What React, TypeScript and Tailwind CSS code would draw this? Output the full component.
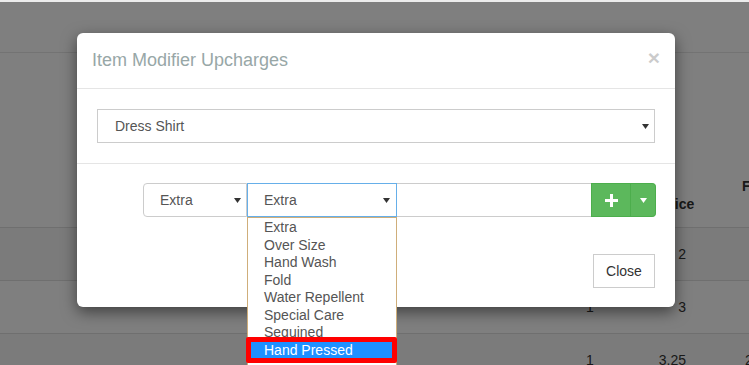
import React from "react";

const upcharges = [
    "Extra",
    "Over Size",
    "Hand Wash",
    "Fold",
    "Water Repellent",
    "Special Care",
    "Sequined",
    "Hand Pressed",
];

function Caret({ className }: { className?: string }) {
    return (
        <svg width="7" height="5" viewBox="0 0 7 5" className={className}>
            <path d="M0 0h7L3.5 5z" fill="currentColor" />
        </svg>
    );
}

function PageBehind() {
    return (
        <div className="flex flex-col w-full h-full bg-white text-[14px] text-[#333]">
            {/* Page header */}
            <div className="h-[51px] border-b border-[#e6e6e6] shrink-0" />

            {/* Table head */}
            <div className="flex h-[175px] border-b border-[#dedede] shrink-0 font-bold">
                <div className="w-[660px] shrink-0" />
                <div className="w-[82px] shrink-0 self-end pb-[13px] leading-[20px]">Price</div>
                <div className="self-start pt-[123px] leading-[20px]">Final</div>
            </div>

            {/* Rows */}
            {[
                { qty: "", price: "2", last: "", striped: true },
                { qty: "1", price: "3", last: "", striped: false },
                { qty: "1", price: "3.25", last: "2", striped: true },
            ].map((row, i) => (
                <div
                    key={i}
                    className={
                        row.striped
                            ? "flex items-center h-[53px] border-b border-[#dedede] shrink-0 bg-[#f7f7f7]"
                            : "flex items-center h-[53px] border-b border-[#dedede] shrink-0"
                    }
                >
                    <div className="w-[586px] shrink-0" />
                    <div className="w-[8px] shrink-0">{row.qty}</div>
                    <div className="w-[92px] shrink-0 text-right">{row.price}</div>
                    <div className="pl-[59px]">{row.last}</div>
                </div>
            ))}
        </div>
    );
}

function SelectBox({
    value,
    className,
}: {
    value: string;
    className: string;
}) {
    return (
        <div className={"flex items-center h-[34px] bg-white text-[14px] text-[#555] " + className}>
            <span className="flex-1">{value}</span>
            <Caret className="text-[#333]" />
        </div>
    );
}

export default function App() {
    return (
        <div
            className="flex flex-col w-[749px] h-[365px] overflow-hidden bg-[#ebebeb]"
            style={{ fontFamily: '"Liberation Sans", Arial, sans-serif' }}
        >
            <div className="h-[2px] shrink-0 bg-[#ececec]" />
            <div className="relative flex-1">
                <PageBehind />

                {/* Backdrop */}
                <div className="absolute inset-0 bg-black/50" />

                {/* Modal */}
                <div className="absolute left-[77px] top-[31px] w-[598px] bg-white rounded-md shadow-[0_5px_15px_rgba(0,0,0,0.5)]">
                    {/* Header */}
                    <div className="flex items-start justify-between px-[15px] py-[15px] border-b border-[#e5e5e5]">
                        <h4 className="text-[18px] leading-[25px] text-[#98a7a7]">Item Modifier Upcharges</h4>
                        <button className="text-[21px] font-bold leading-[21px] text-black opacity-20 -mt-[1px]">
                            ×
                        </button>
                    </div>

                    {/* Body */}
                    <div className="p-[20px] border-b border-[#e5e5e5]">
                        <SelectBox value="Dress Shirt" className="border border-[#cccccc] pl-[17px] pr-[5px]" />
                    </div>

                    {/* Footer */}
                    <div className="flex flex-col items-end px-[19px] pt-[19px] pb-[19px]">
                        <div className="flex w-[513px] h-[34px]">
                            <SelectBox
                                value="Extra"
                                className="w-[104px] border border-[#cccccc] rounded-l-[4px] pl-[16px] pr-[5px]"
                            />
                            <div className="relative w-[150px]">
                                <SelectBox
                                    value="Extra"
                                    className="w-[150px] border border-[#66afe9] pl-[16px] pr-[6px]"
                                />
                                {/* Open dropdown list */}
                                <ul className="absolute left-0 top-[34px] w-[150px] h-[160px] pt-[1px] bg-white border border-[#cfae7a] text-[14px] leading-[17.5px] text-[#555] z-10">
                                    {upcharges.map((item) => (
                                        <li
                                            key={item}
                                            className={
                                                item === "Hand Pressed"
                                                    ? "relative pl-[16px] bg-[#1e90ff] text-white"
                                                    : "pl-[16px]"
                                            }
                                        >
                                            {item}
                                            {item === "Hand Pressed" && (
                                                <span className="absolute -left-[2px] -right-[1px] -top-[5px] -bottom-[4px] border-[5px] border-[#ff0000] rounded-[2px]" />
                                            )}
                                        </li>
                                    ))}
                                </ul>
                            </div>
                            <input
                                className="w-[194px] h-[34px] border-y border-[#cccccc] bg-white outline-none"
                                readOnly
                            />
                            <button className="flex items-center justify-center w-[40px] h-[34px] bg-[#5cb85c] border border-[#4cae4c]">
                                <svg width="13" height="13" viewBox="0 0 13 13">
                                    <path d="M5 0h3v5h5v3H8v5H5V8H0V5h5z" fill="#fff" />
                                </svg>
                            </button>
                            <button className="flex items-center justify-center w-[25px] h-[34px] bg-[#5cb85c] border border-l-0 border-[#4cae4c] rounded-r-[4px]">
                                <Caret className="text-white" />
                            </button>
                        </div>

                        <button className="mt-[37px] w-[62px] h-[34px] border border-[#cccccc] bg-white text-[14px] text-[#333] mr-px">
                            Close
                        </button>
                    </div>
                </div>
            </div>
        </div>
    );
}
